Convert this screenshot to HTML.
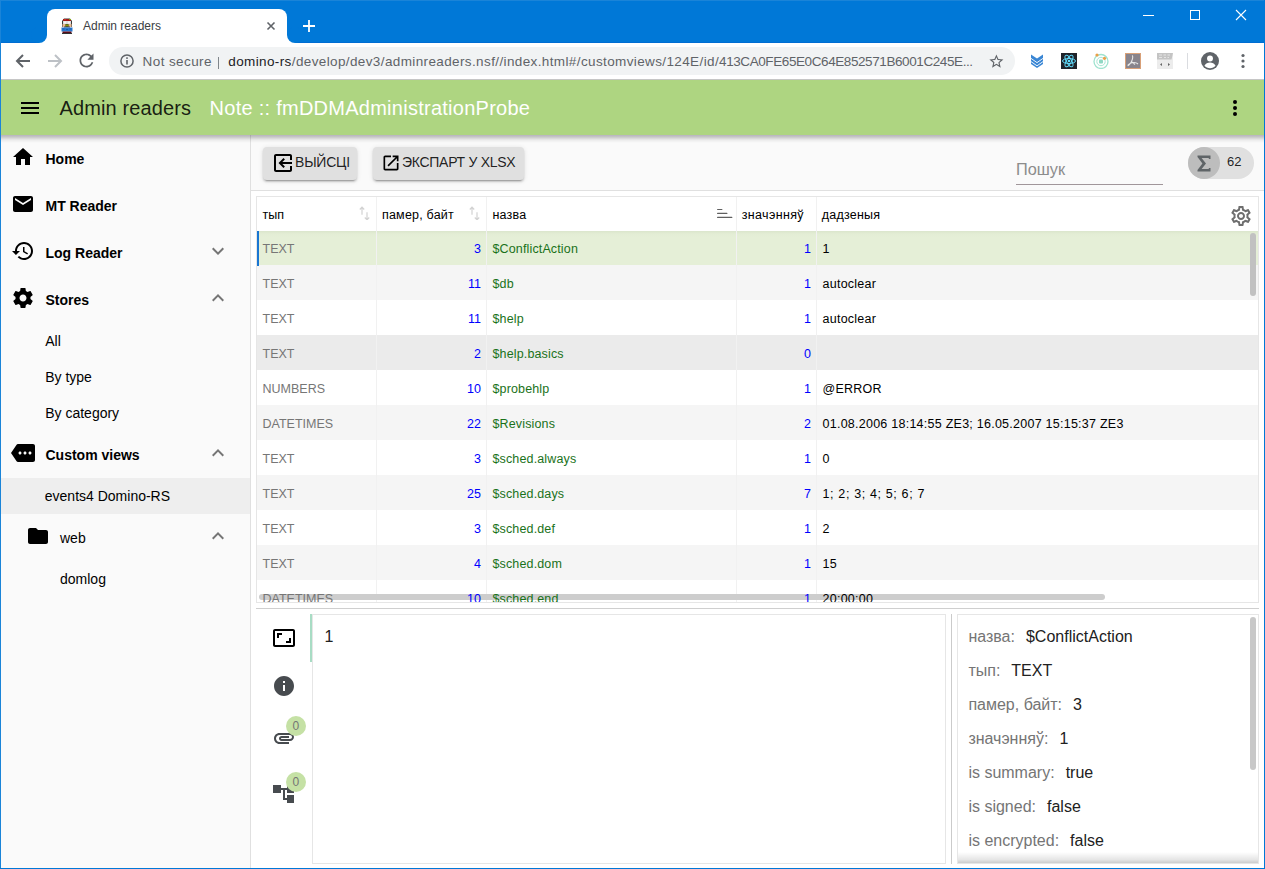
<!DOCTYPE html>
<html><head><meta charset="utf-8">
<style>
*{box-sizing:border-box}
html,body{margin:0;padding:0}
body{width:1265px;height:869px;overflow:hidden;position:relative;background:#fff;font-family:"Liberation Sans",sans-serif;color:#212121}
.a{position:absolute}
.t{position:absolute;line-height:1;white-space:nowrap}
svg{display:block}
</style></head><body>

<!-- window frame / title bar -->
<div class="a" id="titlebar" style="left:0;top:0;width:1265px;height:43px;background:#0078d7"></div>
<div class="a" style="left:0;top:42px;width:1265px;height:1px;background:#006dd2"></div>
<div class="a" style="left:0;top:0;width:1265px;height:1px;background:#1a84d8;z-index:20"></div>
<div class="a" style="left:0;top:0;width:1px;height:869px;background:#1a84d8;z-index:20"></div>
<div class="a" style="left:1264px;top:0;width:1px;height:869px;background:#0078d7;z-index:20"></div>
<div class="a" style="left:0;top:868px;width:1265px;height:1px;background:#0078d7;z-index:20"></div>

<!-- tab -->
<div class="a" style="left:47px;top:9px;width:240px;height:34px;background:#fff;border-radius:8px 8px 0 0"></div>
<div class="a" style="left:39px;top:35px;width:8px;height:8px;background:#fff"></div>
<div class="a" style="left:31px;top:27px;width:16px;height:16px;background:#0078d7;border-radius:50%"></div>
<div class="a" style="left:287px;top:35px;width:8px;height:8px;background:#fff"></div>
<div class="a" style="left:287px;top:27px;width:16px;height:16px;background:#0078d7;border-radius:50%"></div>
<!-- favicon -->
<svg class="a" style="left:61px;top:18px" width="12" height="16" viewBox="0 0 12 16">
<path d="M3 0.5H9L11 3V9H1V3Z" fill="#3a3a3a"/>
<rect x="2" y="1" width="8" height="2" fill="#a01818"/>
<rect x="3" y="1" width="2" height="1" fill="#c03020"/><rect x="8" y="1" width="2" height="1" fill="#80a010"/>
<rect x="2" y="3" width="8" height="3" fill="#dcdcdc"/>
<rect x="3" y="3.5" width="2" height="2" fill="#f4f4f4"/><rect x="7" y="3.5" width="2" height="2" fill="#f4f4f4"/>
<rect x="1.5" y="6" width="3" height="3" fill="#e8b890"/><rect x="7.5" y="6" width="3" height="3" fill="#e8b890"/>
<rect x="4.5" y="6.5" width="3" height="2" fill="#8a9a00"/>
<rect x="3" y="8.5" width="6" height="1" fill="#444"/>
<rect x="0.5" y="9.5" width="11" height="4" fill="#2a78d0"/>
<rect x="1.5" y="10.5" width="2" height="1" fill="#1a5aa8"/><rect x="5" y="11" width="2" height="1" fill="#1a5aa8"/><rect x="8.5" y="10.5" width="2" height="1" fill="#1a5aa8"/>
<rect x="1.5" y="13.5" width="9" height="2" fill="#5a0a18"/>
<rect x="1" y="15" width="10" height="1" fill="#333"/>
</svg>
<div class="t" style="left:83px;top:19.8px;font-size:12px;color:#3c4043">Admin readers</div>
<!-- tab close -->
<svg class="a" style="left:265px;top:20px" width="12" height="12" viewBox="0 0 12 12"><path d="M2.5 2.5L9.5 9.5M9.5 2.5L2.5 9.5" stroke="#5f6368" stroke-width="1.6"/></svg>
<!-- new tab -->
<svg class="a" style="left:302px;top:19px" width="14" height="14" viewBox="0 0 14 14"><path d="M7 1V13M1 7H13" stroke="#fff" stroke-width="1.8"/></svg>
<!-- window controls -->
<div class="a" style="left:1143px;top:15px;width:11px;height:1px;background:#fff"></div>
<div class="a" style="left:1190px;top:10px;width:10px;height:10px;border:1px solid #fff"></div>
<svg class="a" style="left:1235px;top:9px" width="12" height="12" viewBox="0 0 12 12"><path d="M1 1L11 11M11 1L1 11" stroke="#fff" stroke-width="1.1"/></svg>

<!-- toolbar -->
<div class="a" style="left:1px;top:43px;width:1263px;height:36px;background:#fff"></div>
<div class="a" style="left:1px;top:79px;width:1263px;height:1px;background:#c6c6c6"></div>
<svg class="a" style="left:15px;top:53px" width="16" height="16" viewBox="0 0 16 16"><path d="M15 8H2.5M8 2L2 8L8 14" fill="none" stroke="#5f6368" stroke-width="2"/></svg>
<svg class="a" style="left:47px;top:53px" width="16" height="16" viewBox="0 0 16 16"><path d="M1 8H13.5M8 2L14 8L8 14" fill="none" stroke="#bdc1c6" stroke-width="2"/></svg>
<svg class="a" style="left:75.8px;top:49.8px" width="21" height="21" viewBox="0 0 24 24"><path fill="#5f6368" d="M17.65 6.35C16.2 4.9 14.21 4 12 4c-4.42 0-7.99 3.58-7.99 8s3.57 8 7.990 8c3.73 0 6.84-2.55 7.73-6h-2.08c-.82 2.33-3.04 4-5.65 4-3.31 0-6-2.69-6-6s2.69-6 6-6c1.66 0 3.14.69 4.22 1.78L13 11h7V4l-2.35 2.35z"/></svg>
<div class="a" style="left:109px;top:47px;width:906px;height:28px;background:#f1f3f4;border-radius:14px"></div>
<svg class="a" style="left:120px;top:54px" width="14" height="14" viewBox="0 0 14 14"><circle cx="7" cy="7" r="6.1" fill="none" stroke="#5f6368" stroke-width="1.5"/><rect x="6.2" y="6" width="1.6" height="4.5" fill="#5f6368"/><rect x="6.2" y="3.3" width="1.6" height="1.6" fill="#5f6368"/></svg>
<div class="t" id="notsec" style="left:142.6px;top:54.6px;font-size:13.5px;letter-spacing:0.4px;color:#5f6368">Not secure</div>
<div class="a" style="left:218px;top:57px;width:1px;height:12px;background:#80868b"></div>
<div class="t" id="url" style="left:228.3px;top:54.6px;font-size:13.5px;color:#5f6368"><span id="u1" style="letter-spacing:0.38px"><span style="color:#202124">domino-rs</span>/develop/dev3/adminreaders.nsf//index.html#/customviews/124E/id/</span><span id="u2" style="letter-spacing:-0.41px">413CA0FE65E0C64E852571B6001C245E...</span></div>
<svg class="a" style="left:987.8px;top:52.6px" width="16.8" height="16.8" viewBox="0 0 24 24"><path fill="#5f6368" d="M22 9.24l-7.19-.62L12 2 9.19 8.63 2 9.24l5.46 4.73L5.82 21 12 17.27 18.18 21l-1.63-7.03L22 9.24zM12 15.4l-3.76 2.27 1-4.28-3.32-2.88 4.38-.38L12 6.1l1.71 4.04 4.38.38-3.32 2.88 1 4.28L12 15.4z"/></svg>
<!-- extension icons -->
<svg class="a" style="left:1030.5px;top:53.8px" width="12" height="14" viewBox="0 0 12 14"><path d="M0 0.5L6 4.6L12 0.5V10L6 14L0 10Z" fill="#3a86d4"/><path d="M0 4.4L6 8.6L12 4.4M0 7.6L6 11.8L12 7.6" fill="none" stroke="#fff" stroke-width="0.9"/></svg>
<svg class="a" style="left:1061px;top:53px" width="16" height="16" viewBox="0 0 16 16"><rect width="16" height="16" fill="#20232a"/><g fill="none" stroke="#61dafb" stroke-width="1"><ellipse cx="8" cy="8" rx="6.5" ry="2.5"/><ellipse cx="8" cy="8" rx="6.5" ry="2.5" transform="rotate(60 8 8)"/><ellipse cx="8" cy="8" rx="6.5" ry="2.5" transform="rotate(120 8 8)"/></g><circle cx="8" cy="8" r="1.3" fill="#61dafb"/></svg>
<svg class="a" style="left:1093px;top:53px" width="16" height="16" viewBox="0 0 16 16"><circle cx="8" cy="8.5" r="7" fill="none" stroke="#9fe3cf" stroke-width="1.3"/><circle cx="8" cy="8.5" r="4.2" fill="none" stroke="#a8e6d4" stroke-width="1"/><rect x="6" y="6.5" width="4" height="4" rx="1" fill="#8fd8c4"/><circle cx="4" cy="2" r="1.6" fill="#eba048"/><circle cx="11.5" cy="5.3" r="1.6" fill="#eba048"/></svg>
<svg class="a" style="left:1125px;top:53px" width="16" height="16" viewBox="0 0 16 16"><rect width="16" height="16" fill="#d8a078"/><rect x="1" y="1" width="14" height="14" fill="#88848c"/><path d="M7 2.5C8.5 3 7.5 6.5 6.5 8.5C5.5 10.5 3.5 13 3 12.5C2.5 11.5 6 9.5 9 9.5C11 9.5 12.5 10.5 13 11M6.5 8.5C7.5 10 9 10.5 10 11.5" fill="none" stroke="#e8e8e8" stroke-width="1.1"/></svg>
<svg class="a" style="left:1157px;top:53px" width="16" height="16" viewBox="0 0 16 16"><rect width="16" height="16" fill="#ececec"/><path d="M0 0H16L14.5 6.5H0Z" fill="#c4c4c4"/><path d="M2 2H5M6.5 2H9M10.5 2H13M2 4.5H5M7 4.5H9M10.5 4.5H12" stroke="#e4e4e4" stroke-width="1"/><path d="M3 11.5L5 10V13Z M13 11.5L11 10V13Z" fill="#666"/></svg>
<div class="a" style="left:1187px;top:53px;width:1px;height:16px;background:#dadce0"></div>
<svg class="a" style="left:1201px;top:52px" width="18" height="18" viewBox="0 0 20 20"><circle cx="10" cy="10" r="10" fill="#5f6368"/><circle cx="10" cy="7.3" r="3.3" fill="#fff"/><path d="M3.8 15.2C5.2 12.8 7.5 11.8 10 11.8C12.5 11.8 14.8 12.8 16.2 15.2C14.7 17 12.5 18 10 18C7.5 18 5.3 17 3.8 15.2Z" fill="#fff"/></svg>
<svg class="a" style="left:1240px;top:53px" width="6" height="16" viewBox="0 0 6 16"><circle cx="3" cy="2.5" r="1.6" fill="#5f6368"/><circle cx="3" cy="8" r="1.6" fill="#5f6368"/><circle cx="3" cy="13.5" r="1.6" fill="#5f6368"/></svg>

<!-- app bar -->
<div class="a" style="left:1px;top:80px;width:1263px;height:55px;background:#aed581;z-index:5"></div>
<div class="a" style="left:1px;top:135px;width:1263px;height:8px;background:linear-gradient(to bottom,rgba(40,30,60,.32) 0,rgba(0,0,0,.2) 2px,rgba(0,0,0,.06) 5px,rgba(0,0,0,0) 8px);z-index:5"></div>
<div class="a" style="left:21px;top:102px;width:18px;height:2px;background:#000;z-index:6"></div>
<div class="a" style="left:21px;top:107px;width:18px;height:2px;background:#000;z-index:6"></div>
<div class="a" style="left:21px;top:112px;width:18px;height:2px;background:#000;z-index:6"></div>
<div class="t" style="left:59.5px;top:97.6px;font-size:20px;letter-spacing:0.12px;color:rgba(0,0,0,.87);z-index:6">Admin readers</div>
<div class="t" style="left:209.6px;top:97.6px;font-size:20px;letter-spacing:0.26px;color:#fff;z-index:6">Note :: fmDDMAdministrationProbe</div>
<svg class="a" style="left:1231px;top:98px;z-index:6" width="8" height="20" viewBox="0 0 8 20"><circle cx="4" cy="4" r="2" fill="#000"/><circle cx="4" cy="10" r="2" fill="#000"/><circle cx="4" cy="16" r="2" fill="#000"/></svg>


<!-- sidebar -->
<div class="a" style="left:1px;top:135px;width:249px;height:733px;background:#fafafa"></div>
<div class="a" style="left:250px;top:135px;width:1px;height:733px;background:#e0e0e0"></div>
<div class="a" style="left:1px;top:478px;width:249px;height:36px;background:#eeeeee"></div>
<!-- icons -->
<svg class="a" style="left:11px;top:145px" width="24" height="24" viewBox="0 0 24 24"><path d="M10 20v-6h4v6h5v-8h3L12 3 2 12h3v8z"/></svg>
<svg class="a" style="left:11px;top:192px" width="24" height="24" viewBox="0 0 24 24"><path d="M20 4H4c-1.1 0-1.99.9-1.99 2L2 18c0 1.1.9 2 2 2h16c1.1 0 2-.9 2-2V6c0-1.1-.9-2-2-2zm0 4l-8 5-8-5V6l8 5 8-5v2z"/></svg>
<svg class="a" style="left:11px;top:239px" width="24" height="24" viewBox="0 0 24 24"><path d="M13 3c-4.97 0-9 4.03-9 9H1l3.89 3.89.07.14L9 12H6c0-3.87 3.13-7 7-7s7 3.13 7 7-3.13 7-7 7c-1.93 0-3.68-.79-4.94-2.06l-1.42 1.42C8.27 19.99 10.51 21 13 21c4.97 0 9-4.03 9-9s-4.03-9-9-9zm-1 5v5l4.28 2.54.72-1.21-3.5-2.08V8H12z"/></svg>
<svg class="a" style="left:11px;top:286px" width="24" height="24" viewBox="0 0 24 24"><path d="M19.43 12.98c.04-.32.07-.64.07-.98s-.03-.66-.07-.98l2.11-1.65c.19-.15.24-.42.12-.64l-2-3.46c-.12-.22-.39-.3-.61-.22l-2.49 1c-.52-.4-1.08-.73-1.690-.98l-.38-2.65C14.46 2.18 14.25 2 14 2h-4c-.25 0-.46.18-.49.42l-.38 2.65c-.61.25-1.17.59-1.69.98l-2.49-1c-.23-.09-.49 0-.61.22l-2 3.46c-.13.22-.07.49.12.64l2.11 1.650c-.04.32-.07.65-.07.98s.03.66.07.98l-2.11 1.65c-.19.15-.24.42-.12.64l2 3.46c.12.22.39.3.61.22l2.49-1c.52.4 1.08.73 1.69.98l.38 2.65c.03.24.24.42.49.42h4c.25 0 .46-.18.49-.42l.38-2.65c.61-.25 1.17-.59 1.69-.98l2.49 1c.23.09.49 0 .61-.22l2-3.46c.12-.22.07-.49-.12-.64l-2.11-1.65zM12 15.5c-1.93 0-3.5-1.57-3.5-3.5s1.57-3.5 3.5-3.5 3.5 1.57 3.5 3.5-1.57 3.5-3.5 3.5z"/></svg>
<svg class="a" style="left:11px;top:441px" width="24" height="24" viewBox="0 0 24 24"><path d="M22 3H7c-.69 0-1.23.35-1.59.88L0 12l5.41 8.11c.36.53.97.89 1.66.89H22c1.1 0 2-.9 2-2V5c0-1.1-.9-2-2-2zM9 13.5c-.83 0-1.5-.67-1.5-1.5s.67-1.5 1.5-1.5 1.5.67 1.5 1.5-.67 1.5-1.5 1.5zm5 0c-.83 0-1.5-.67-1.5-1.5s.67-1.5 1.5-1.5 1.5.67 1.5 1.5-.67 1.5-1.5 1.5zm5 0c-.83 0-1.5-.67-1.5-1.5s.67-1.5 1.5-1.5 1.5.67 1.5 1.5-.67 1.5-1.5 1.5z"/></svg>
<svg class="a" style="left:26px;top:524px" width="24" height="24" viewBox="0 0 24 24"><path d="M10 4H4c-1.1 0-1.99.9-1.99 2L2 18c0 1.1.9 2 2 2h16c1.1 0 2-.9 2-2V8c0-1.1-.9-2-2-2h-8l-2-2z"/></svg>
<svg class="a" style="left:206px;top:239px" width="24" height="24" viewBox="0 0 24 24"><path fill="#757575" d="M16.59 8.59L12 13.17 7.41 8.59 6 10l6 6 6-6z"/></svg>
<svg class="a" style="left:206px;top:286px" width="24" height="24" viewBox="0 0 24 24"><path fill="#757575" d="M12 8l-6 6 1.41 1.41L12 10.83l4.59 4.58L18 14z"/></svg>
<svg class="a" style="left:206px;top:441px" width="24" height="24" viewBox="0 0 24 24"><path fill="#757575" d="M12 8l-6 6 1.41 1.41L12 10.83l4.59 4.58L18 14z"/></svg>
<svg class="a" style="left:206px;top:524px" width="24" height="24" viewBox="0 0 24 24"><path fill="#757575" d="M12 8l-6 6 1.41 1.41L12 10.83l4.59 4.58L18 14z"/></svg>
<div class="t" style="left:45.5px;top:152.1px;font-size:14px;font-weight:bold;color:#000">Home</div>
<div class="t" style="left:45.5px;top:199.1px;font-size:14px;font-weight:bold;color:#000">MT Reader</div>
<div class="t" style="left:45.5px;top:246.1px;font-size:14px;font-weight:bold;color:#000">Log Reader</div>
<div class="t" style="left:45.5px;top:293.1px;font-size:14px;font-weight:bold;color:#000">Stores</div>
<div class="t" style="left:45.2px;top:334.1px;font-size:14px;color:#000">All</div>
<div class="t" style="left:45.2px;top:370.1px;font-size:14px;color:#000">By type</div>
<div class="t" style="left:45.2px;top:406.1px;font-size:14px;color:#000">By category</div>
<div class="t" style="left:45.5px;top:448.1px;font-size:14px;font-weight:bold;color:#000">Custom views</div>
<div class="t" style="left:44.8px;top:489.1px;font-size:14px;color:#000">events4 Domino-RS</div>
<div class="t" style="left:60px;top:531.1px;font-size:14px;color:#000">web</div>
<div class="t" style="left:60px;top:572.1px;font-size:14px;color:#000">domlog</div>

<!-- content toolbar -->
<div class="a" style="left:251px;top:135px;width:1013px;height:55px;background:#fafafa"></div>
<div class="a" style="left:251px;top:190px;width:1013px;height:1px;background:#e0e0e0"></div>
<div class="a" style="left:263px;top:147px;width:94px;height:33px;background:#e0e0e0;border-radius:4px;box-shadow:0 3px 1px -2px rgba(0,0,0,.2),0 2px 2px 0 rgba(0,0,0,.14),0 1px 5px 0 rgba(0,0,0,.12)"></div>
<svg class="a" style="left:271px;top:151px" width="24" height="24" viewBox="0 0 24 24"><path d="M13.91 15.59L12.5 17l-5-5 5-5 1.41 1.41L11.33 11H21v2h-9.67l2.58 2.59zM5 3h14c1.11 0 2 .9 2 2v4h-2V5H5v14h14v-4h2v4c0 1.1-.89 2-2 2H5c-1.1 0-2-.9-2-2V5c0-1.1.9-2 2-2z"/></svg>
<div class="t" style="left:295px;top:155px;font-size:14px;letter-spacing:-0.2px;color:rgba(0,0,0,.87)">ВЫЙСЦІ</div>
<div class="a" style="left:373px;top:147px;width:151px;height:33px;background:#e0e0e0;border-radius:4px;box-shadow:0 3px 1px -2px rgba(0,0,0,.2),0 2px 2px 0 rgba(0,0,0,.14),0 1px 5px 0 rgba(0,0,0,.12)"></div>
<svg class="a" style="left:381px;top:152.5px" width="20" height="20" viewBox="0 0 24 24"><path d="M19 19H5V5h7V3H5c-1.11 0-2 .9-2 2v14c0 1.1.89 2 2 2h14c1.1 0 2-.9 2-2v-7h-2v7zM14 3v2h3.59l-9.83 9.830 1.41 1.41L19 6.41V10h2V3h-7z"/></svg>
<div class="t" style="left:402px;top:155px;font-size:14px;letter-spacing:-0.28px;color:rgba(0,0,0,.87)">ЭКСПАРТ У XLSX</div>
<!-- search -->
<div class="t" style="left:1016px;top:161px;font-size:16.3px;color:#8c8c8c">Пошук</div>
<div class="a" style="left:1016px;top:184px;width:147px;height:1px;background:#a0969a"></div>
<!-- sigma chip -->
<div class="a" style="left:1188px;top:147px;width:66px;height:32px;background:#e0e0e0;border-radius:16px"></div>
<div class="a" style="left:1188px;top:147px;width:32px;height:32px;background:#bdbdbd;border-radius:16px"></div>
<svg class="a" style="left:1196px;top:155px" width="16" height="17" viewBox="0 0 16 17"><path d="M1.5 0.5H14.5V4H13L12.6 3H5.6L10 8.5L5.6 14H12.6L13 13H14.5V16.5H1.5V15L6.4 8.5L1.5 2Z" fill="#5f6467"/></svg>
<div class="t" style="left:1227px;top:155px;font-size:13px;color:rgba(0,0,0,.87)">62</div>

<!-- table -->
<div class="a" style="left:256px;top:196px;width:1003px;height:407px;border:1px solid #e6e6e6;background:#fff;overflow:hidden" id="tbl">
<div class="a" style="left:0;top:34px;width:1001px;height:34px;background:linear-gradient(to bottom,#dbe6cc 0,#e3edd5 3px,#e5efd7 6px)"></div>
<div class="a" style="left:0;top:68px;width:1001px;height:35px;background:#f5f5f5"></div>
<div class="a" style="left:0;top:103px;width:1001px;height:35px;background:#fff"></div>
<div class="a" style="left:0;top:138px;width:1001px;height:35px;background:#ebebeb"></div>
<div class="a" style="left:0;top:173px;width:1001px;height:35px;background:#fff"></div>
<div class="a" style="left:0;top:208px;width:1001px;height:35px;background:#f5f5f5"></div>
<div class="a" style="left:0;top:243px;width:1001px;height:35px;background:#fff"></div>
<div class="a" style="left:0;top:278px;width:1001px;height:35px;background:#f5f5f5"></div>
<div class="a" style="left:0;top:313px;width:1001px;height:35px;background:#fff"></div>
<div class="a" style="left:0;top:348px;width:1001px;height:35px;background:#f5f5f5"></div>
<div class="a" style="left:0;top:383px;width:1001px;height:35px;background:#fff"></div>
<div class="a" style="left:119px;top:0;width:1px;height:405px;background:#f1f1f1"></div>
<div class="a" style="left:229px;top:0;width:1px;height:405px;background:#f1f1f1"></div>
<div class="a" style="left:479px;top:0;width:1px;height:405px;background:#f1f1f1"></div>
<div class="a" style="left:559px;top:0;width:1px;height:405px;background:#f1f1f1"></div>
<div class="a" style="left:2px;top:397px;width:846px;height:6px;background:#cdcdcd;border-radius:3px"></div>
<div class="t" style="left:5.5px;top:12.42px;font-size:12.5px;letter-spacing:0px;color:#000">тып</div>
<div class="t" style="left:125.0px;top:12.42px;font-size:12.5px;letter-spacing:0.2px;color:#000">памер, байт</div>
<div class="t" style="left:235.5px;top:12.42px;font-size:12.5px;letter-spacing:0.2px;color:#000">назва</div>
<div class="t" style="left:484.7px;top:12.42px;font-size:12.5px;letter-spacing:0.35px;color:#000">значэнняў</div>
<div class="t" style="left:564.8px;top:12.42px;font-size:12.5px;letter-spacing:0.2px;color:#000">дадзеныя</div>
<div class="t" style="left:5.5px;top:46.42px;font-size:12.5px;color:#767676">TEXT</div>
<div class="t" style="right:777.0px;top:46.42px;font-size:12.5px;color:#0000ff">3</div>
<div class="t" style="left:235.5px;top:46.42px;font-size:12.5px;letter-spacing:0.14px;color:#1a721a">$ConflictAction</div>
<div class="t" style="right:447.0px;top:46.42px;font-size:12.5px;color:#0000ff">1</div>
<div class="t" style="left:565.5px;top:46.42px;font-size:12.5px;letter-spacing:0.25px;color:#000">1</div>
<div class="t" style="left:5.5px;top:81.42px;font-size:12.5px;color:#767676">TEXT</div>
<div class="t" style="right:777.0px;top:81.42px;font-size:12.5px;color:#0000ff">11</div>
<div class="t" style="left:235.5px;top:81.42px;font-size:12.5px;letter-spacing:0.14px;color:#1a721a">$db</div>
<div class="t" style="right:447.0px;top:81.42px;font-size:12.5px;color:#0000ff">1</div>
<div class="t" style="left:565.5px;top:81.42px;font-size:12.5px;letter-spacing:0.25px;color:#000">autoclear</div>
<div class="t" style="left:5.5px;top:116.42px;font-size:12.5px;color:#767676">TEXT</div>
<div class="t" style="right:777.0px;top:116.42px;font-size:12.5px;color:#0000ff">11</div>
<div class="t" style="left:235.5px;top:116.42px;font-size:12.5px;letter-spacing:0.14px;color:#1a721a">$help</div>
<div class="t" style="right:447.0px;top:116.42px;font-size:12.5px;color:#0000ff">1</div>
<div class="t" style="left:565.5px;top:116.42px;font-size:12.5px;letter-spacing:0.25px;color:#000">autoclear</div>
<div class="t" style="left:5.5px;top:151.42px;font-size:12.5px;color:#767676">TEXT</div>
<div class="t" style="right:777.0px;top:151.42px;font-size:12.5px;color:#0000ff">2</div>
<div class="t" style="left:235.5px;top:151.42px;font-size:12.5px;letter-spacing:0.14px;color:#1a721a">$help.basics</div>
<div class="t" style="right:447.0px;top:151.42px;font-size:12.5px;color:#0000ff">0</div>
<div class="t" style="left:565.5px;top:151.42px;font-size:12.5px;letter-spacing:0.25px;color:#000"></div>
<div class="t" style="left:5.5px;top:186.42px;font-size:12.5px;color:#767676">NUMBERS</div>
<div class="t" style="right:777.0px;top:186.42px;font-size:12.5px;color:#0000ff">10</div>
<div class="t" style="left:235.5px;top:186.42px;font-size:12.5px;letter-spacing:0.14px;color:#1a721a">$probehlp</div>
<div class="t" style="right:447.0px;top:186.42px;font-size:12.5px;color:#0000ff">1</div>
<div class="t" style="left:565.5px;top:186.42px;font-size:12.5px;letter-spacing:0.25px;color:#000">@ERROR</div>
<div class="t" style="left:5.5px;top:221.42px;font-size:12.5px;color:#767676">DATETIMES</div>
<div class="t" style="right:777.0px;top:221.42px;font-size:12.5px;color:#0000ff">22</div>
<div class="t" style="left:235.5px;top:221.42px;font-size:12.5px;letter-spacing:0.14px;color:#1a721a">$Revisions</div>
<div class="t" style="right:447.0px;top:221.42px;font-size:12.5px;color:#0000ff">2</div>
<div class="t" style="left:565.5px;top:221.42px;font-size:12.5px;letter-spacing:0.25px;color:#000">01.08.2006 18:14:55 ZE3; 16.05.2007 15:15:37 ZE3</div>
<div class="t" style="left:5.5px;top:256.42px;font-size:12.5px;color:#767676">TEXT</div>
<div class="t" style="right:777.0px;top:256.42px;font-size:12.5px;color:#0000ff">3</div>
<div class="t" style="left:235.5px;top:256.42px;font-size:12.5px;letter-spacing:0.14px;color:#1a721a">$sched.always</div>
<div class="t" style="right:447.0px;top:256.42px;font-size:12.5px;color:#0000ff">1</div>
<div class="t" style="left:565.5px;top:256.42px;font-size:12.5px;letter-spacing:0.25px;color:#000">0</div>
<div class="t" style="left:5.5px;top:291.42px;font-size:12.5px;color:#767676">TEXT</div>
<div class="t" style="right:777.0px;top:291.42px;font-size:12.5px;color:#0000ff">25</div>
<div class="t" style="left:235.5px;top:291.42px;font-size:12.5px;letter-spacing:0.14px;color:#1a721a">$sched.days</div>
<div class="t" style="right:447.0px;top:291.42px;font-size:12.5px;color:#0000ff">7</div>
<div class="t" style="left:565.5px;top:291.42px;font-size:12.5px;letter-spacing:0.64px;color:#000">1; 2; 3; 4; 5; 6; 7</div>
<div class="t" style="left:5.5px;top:326.42px;font-size:12.5px;color:#767676">TEXT</div>
<div class="t" style="right:777.0px;top:326.42px;font-size:12.5px;color:#0000ff">3</div>
<div class="t" style="left:235.5px;top:326.42px;font-size:12.5px;letter-spacing:0.14px;color:#1a721a">$sched.def</div>
<div class="t" style="right:447.0px;top:326.42px;font-size:12.5px;color:#0000ff">1</div>
<div class="t" style="left:565.5px;top:326.42px;font-size:12.5px;letter-spacing:0.25px;color:#000">2</div>
<div class="t" style="left:5.5px;top:361.42px;font-size:12.5px;color:#767676">TEXT</div>
<div class="t" style="right:777.0px;top:361.42px;font-size:12.5px;color:#0000ff">4</div>
<div class="t" style="left:235.5px;top:361.42px;font-size:12.5px;letter-spacing:0.14px;color:#1a721a">$sched.dom</div>
<div class="t" style="right:447.0px;top:361.42px;font-size:12.5px;color:#0000ff">1</div>
<div class="t" style="left:565.5px;top:361.42px;font-size:12.5px;letter-spacing:0.25px;color:#000">15</div>
<div class="t" style="left:5.5px;top:396.42px;font-size:12.5px;color:#767676">DATETIMES</div>
<div class="t" style="right:777.0px;top:396.42px;font-size:12.5px;color:#0000ff">10</div>
<div class="t" style="left:235.5px;top:396.42px;font-size:12.5px;letter-spacing:0.14px;color:#1a721a">$sched.end</div>
<div class="t" style="right:447.0px;top:396.42px;font-size:12.5px;color:#0000ff">1</div>
<div class="t" style="left:565.5px;top:396.42px;font-size:12.5px;letter-spacing:0.25px;color:#000">20:00:00</div>
<div class="a" style="left:0;top:34px;width:2px;height:35px;background:#1976d2"></div>
<div class="a" style="left:993px;top:36px;width:6px;height:63px;background:#c1c1c1;border-radius:3px"></div>
</div>
<svg class="a" style="left:357px;top:206px" width="14" height="14" viewBox="0 0 14 14"><path d="M5 1.2V8.8M2.8 3.5L5 1.2L7.2 3.5M10 6.3V13.8M7.8 11.5L10 13.8L12.2 11.5" fill="none" stroke="#d2d2d2" stroke-width="1.2"/></svg>
<svg class="a" style="left:467px;top:206px" width="14" height="14" viewBox="0 0 14 14"><path d="M5 1.2V8.8M2.8 3.5L5 1.2L7.2 3.5M10 6.3V13.8M7.8 11.5L10 13.8L12.2 11.5" fill="none" stroke="#d2d2d2" stroke-width="1.2"/></svg>
<svg class="a" style="left:716px;top:207px" width="17" height="13" viewBox="0 0 17 13"><path d="M1.6 2.5H5.9M1.6 6.4H10.9M1.6 10.4H15.8" stroke="#606060" stroke-width="1.15" stroke-linecap="round"/></svg>
<svg class="a" style="left:1229px;top:204px" width="24" height="24" viewBox="0 0 24 24"><path fill="#6e6e6e" d="M19.43 12.98c.04-.32.07-.64.07-.98 0-.34-.03-.66-.07-.98l2.11-1.65c.19-.15.24-.42.12-.64l-2-3.46c-.09-.16-.26-.25-.44-.25-.06 0-.12.01-.17.03l-2.49 1c-.52-.4-1.08-.73-1.69-.98l-.38-2.65C14.46 2.18 14.25 2 14 2h-4c-.25 0-.46.18-.49.42l-.38 2.65c-.61.25-1.17.59-1.69.98l-2.49-1c-.06-.02-.12-.03-.18-.03-.17 0-.34.09-.43.25l-2 3.46c-.13.22-.07.49.12.64l2.11 1.65c-.04.32-.07.65-.07.98 0 .33.03.66.07.98l-2.11 1.65c-.19.15-.24.42-.12.64l2 3.46c.09.16.26.25.44.25.06 0 .12-.01.17-.03l2.49-1c.52.4 1.08.73 1.69.98l.38 2.65c.03.24.24.42.49.42h4c.25 0 .46-.18.49-.42l.38-2.65c.61-.25 1.17-.59 1.69-.98l2.49 1c.06.02.12.03.18.03.17 0 .34-.09.43-.25l2-3.46c.12-.22.07-.49-.12-.64l-2.11-1.65zm-1.98-1.710c.04.31.05.52.05.73 0 .21-.02.43-.05.73l-.14 1.13.89.7 1.08.84-.7 1.21-1.27-.51-1.04-.42-.9.68c-.43.32-.84.56-1.25.73l-1.06.43-.16 1.13-.2 1.35h-1.4l-.19-1.35-.16-1.13-1.06-.43c-.43-.18-.83-.41-1.23-.71l-.91-.7-1.06.43-1.27.51-.7-1.21 1.08-.84.89-.7-.14-1.13c-.03-.31-.05-.54-.05-.74s.02-.43.05-.73l.14-1.13-.89-.7-1.08-.84.7-1.21 1.27.51 1.04.42.9-.68c.43-.32.84-.56 1.25-.73l1.06-.43.16-1.13.2-1.35h1.39l.19 1.35.16 1.13 1.06.43c.43.18.83.41 1.23.71l.91.7 1.06-.43 1.27-.51.7 1.21-1.07.85-.89.7.14 1.13zM12 8c-2.21 0-4 1.79-4 4s1.79 4 4 4 4-1.79 4-4-1.79-4-4-4zm0 6c-1.1 0-2-.9-2-2s.9-2 2-2 2 .9 2 2-.9 2-2 2z"/></svg>

<!-- bottom panel -->
<div class="a" style="left:256px;top:608px;width:1003px;height:1px;background:#cfcfcf"></div>
<div class="a" style="left:312px;top:614px;width:634px;height:250px;border:1px solid #e6e6e6;background:#fff"></div>
<div class="a" style="left:310px;top:614px;width:2px;height:48px;background:#a8dcc4"></div>
<div class="t" style="left:324.5px;top:628.5px;font-size:16px;color:#212121">1</div>
<div class="a" style="left:951px;top:614px;width:1px;height:250px;background:#cbcbcb"></div>
<div class="a" style="left:957px;top:614px;width:302px;height:250px;border:1px solid #e6e6e6;background:#fff;overflow:hidden">
  <div class="a" style="left:0;bottom:0;width:300px;height:11px;background:linear-gradient(to bottom,rgba(0,0,0,0),rgba(0,0,0,.1) 70%,rgba(0,0,0,.2))"></div>
</div>
<div class="a" style="left:1250px;top:617px;width:6px;height:153px;background:#c8c8c8;border-radius:3px"></div>
<!-- icons -->
<svg class="a" style="left:272px;top:626px" width="24" height="24" viewBox="0 0 24 24"><path d="M19 12h-2v3h-3v2h5v-5zM7 9h3V7H5v5h2V9zm14-6H3c-1.1 0-2 .9-2 2v14c0 1.1.9 2 2 2h18c1.1 0 2-.9 2-2V5c0-1.1-.9-2-2-2zm0 16.01H3V4.99h18v14.02z"/></svg>
<svg class="a" style="left:272px;top:674px" width="24" height="24" viewBox="0 0 24 24"><path fill="#474b4f" d="M12 2C6.48 2 2 6.48 2 12s4.48 10 10 10 10-4.48 10-10S17.52 2 12 2zm1 15h-2v-6h2v6zm0-8h-2V7h2v2z"/></svg>
<svg class="a" style="left:272px;top:726px" width="24" height="24" viewBox="0 0 24 24"><path fill="#474b4f" d="M2 12.5C2 9.46 4.46 7 7.5 7H18c2.21 0 4 1.79 4 4s-1.79 4-4 4H9.5C8.12 15 7 13.88 7 12.5S8.12 10 9.5 10H17v2H9.41c-.55 0-.55 1 0 1H18c1.1 0 2-.9 2-2s-.9-2-2-2H7.5C5.57 9 4 10.57 4 12.5S5.57 16 7.5 16H17v2H7.5C4.46 18 2 15.54 2 12.5z"/></svg>
<svg class="a" style="left:272px;top:780px" width="24" height="24" viewBox="0 0 24 24"><g fill="#474b4f"><rect x="1" y="5" width="8" height="8"/><rect x="15" y="6" width="7" height="7"/><rect x="9" y="8" width="6" height="2"/><rect x="11" y="8" width="2" height="12"/><rect x="11" y="18" width="4" height="2"/><rect x="15" y="15" width="7" height="8"/></g></svg>
<div class="a" style="left:286px;top:716px;width:20px;height:20px;border-radius:50%;background:#c5e1a5"></div>
<div class="t" style="left:292.5px;top:720px;font-size:12px;color:#757575">0</div>
<div class="a" style="left:286px;top:772px;width:20px;height:20px;border-radius:50%;background:#c5e1a5"></div>
<div class="t" style="left:292.5px;top:776px;font-size:12px;color:#757575">0</div>
<!-- details -->
<div class="t" style="left:968.4px;top:629.26px;font-size:16px;color:#757575">назва:<span style="color:#212121;margin-left:11px">$ConflictAction</span></div>
<div class="t" style="left:968.4px;top:663.26px;font-size:16px;color:#757575">тып:<span style="color:#212121;margin-left:11px">TEXT</span></div>
<div class="t" style="left:968.4px;top:697.26px;font-size:16px;color:#757575">памер, байт:<span style="color:#212121;margin-left:11px">3</span></div>
<div class="t" style="left:968.4px;top:731.26px;font-size:16px;color:#757575">значэнняў:<span style="color:#212121;margin-left:11px">1</span></div>
<div class="t" style="left:968.4px;top:765.26px;font-size:16px;color:#757575">is summary:<span style="color:#212121;margin-left:11px">true</span></div>
<div class="t" style="left:968.4px;top:799.26px;font-size:16px;color:#757575">is signed:<span style="color:#212121;margin-left:11px">false</span></div>
<div class="t" style="left:968.4px;top:833.26px;font-size:16px;color:#757575">is encrypted:<span style="color:#212121;margin-left:11px">false</span></div>

</body></html>
